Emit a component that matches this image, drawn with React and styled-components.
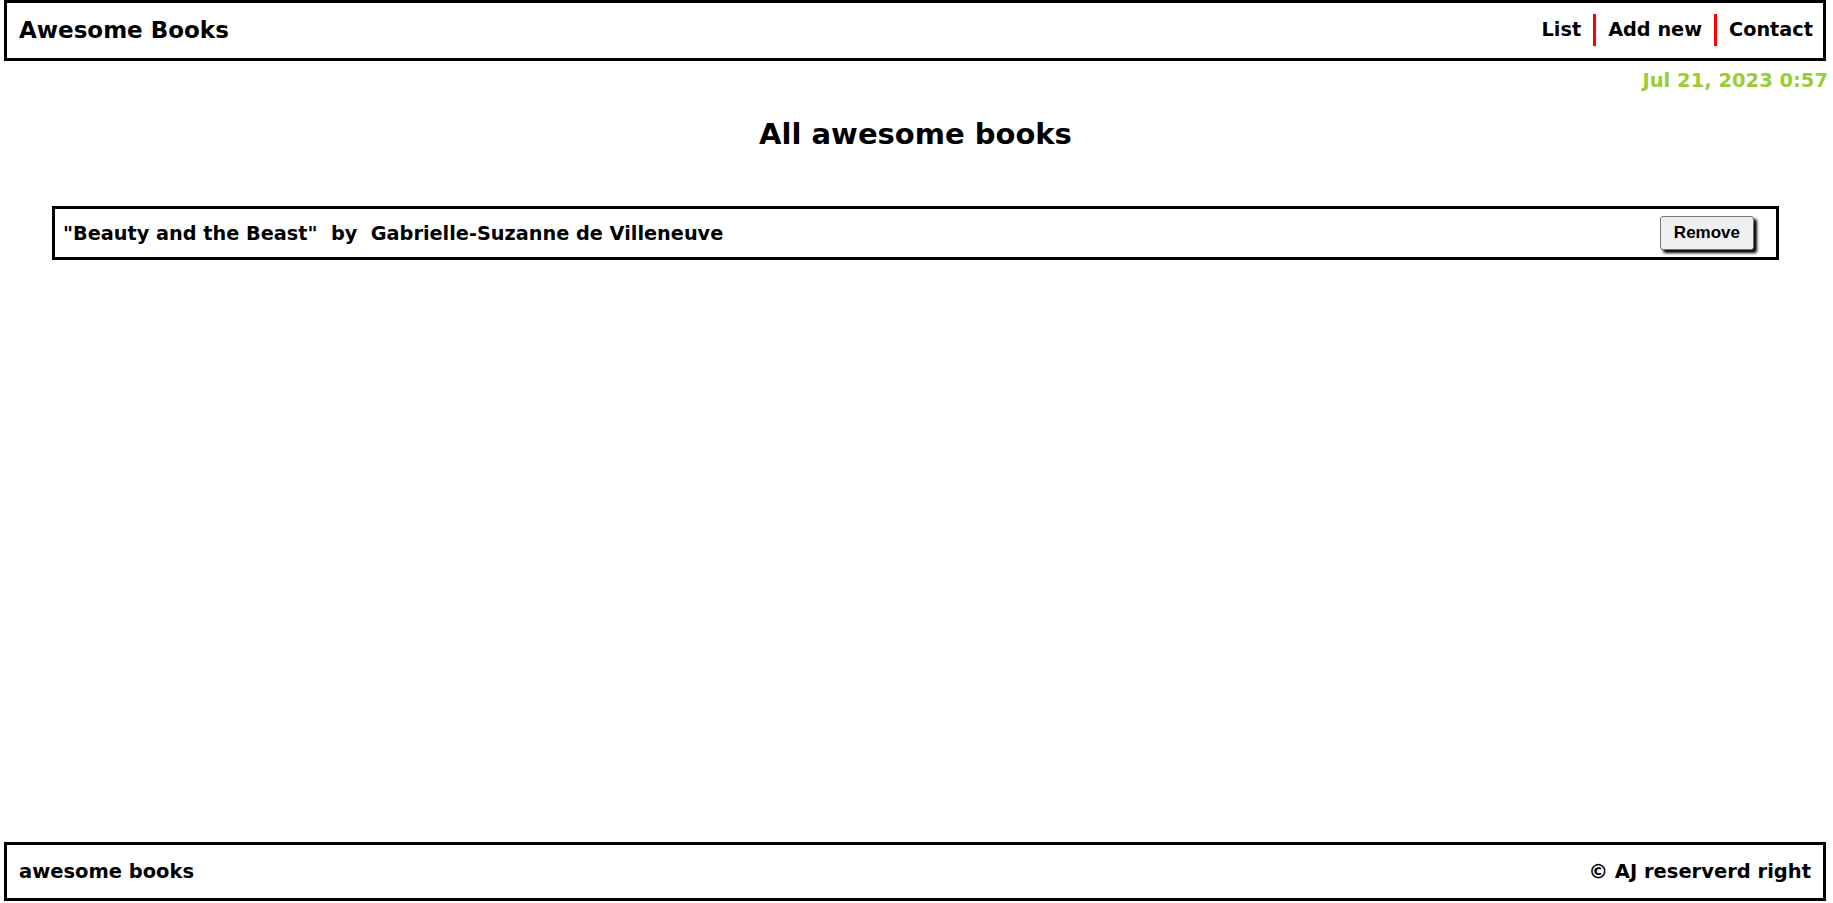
import React from 'react'
import styled, { createGlobalStyle } from 'styled-components'

const GlobalStyle = createGlobalStyle`
  * {
    box-sizing: border-box;
  }

  body {
    margin: 0;
    padding: 0 7px 0 4px;
    font-family: "DejaVu Sans", "Noto Sans", sans-serif;
    color: #000;
    background: #fff;
  }
`

const Page = styled.div`
  display: flex;
  flex-direction: column;
  min-height: 902px;
`

const Header = styled.header`
  display: flex;
  align-items: center;
  justify-content: space-between;
  height: 61px;
  border: 3px solid #000;
  padding: 0 10px 2px 12px;
`

const Brand = styled.h1`
  margin: 0;
  font-size: 23px;
  font-weight: 700;
`

const Nav = styled.nav`
  display: flex;
  align-items: center;
`

const NavLink = styled.a`
  font-size: 19.3px;
  font-weight: 700;
  color: #000;
  text-decoration: none;
  padding: 0 12px;
  line-height: 32px;
  border-left: ${(p) => (p.first ? 'none' : '3px solid #f00')};

  &:last-child {
    padding-right: 0;
  }
`

const DateLine = styled.p`
  margin: 8px -2px 0 0;
  text-align: right;
  font-size: 19.5px;
  font-weight: 700;
  color: #9acd32;
`

const Main = styled.main`
  display: flex;
  flex-direction: column;
  padding: 0 47px 0 48px;
`

const Title = styled.h2`
  margin: 25px 0 55px;
  text-align: center;
  font-size: 29px;
  font-weight: 700;
`

const BookRow = styled.div`
  display: flex;
  align-items: center;
  justify-content: space-between;
  height: 54px;
  border: 3px solid #000;
  padding: 0 22px 0 8px;
`

const BookText = styled.p`
  margin: 0;
  font-size: 19.3px;
  font-weight: 700;
  white-space: pre;
`

const RemoveButton = styled.button`
  font-family: "Liberation Sans", Arial, sans-serif;
  font-size: 17px;
  font-weight: 700;
  color: #000;
  background: #efefef;
  border: 1px solid #767676;
  border-radius: 3px;
  height: 34px;
  padding: 0 13px;
  box-shadow: 3px 3px 3px #000;
`

const Footer = styled.footer`
  display: flex;
  align-items: center;
  justify-content: space-between;
  margin-top: auto;
  height: 59px;
  border: 3px solid #000;
  padding: 0 12px 0 12px;
  margin-bottom: 1px;
`

const FootText = styled.p`
  margin: 0;
  font-size: 19.5px;
  font-weight: 700;
`

const books = [
  { title: 'Beauty and the Beast', author: 'Gabrielle-Suzanne de Villeneuve' }
]

const App = () => (
  <Page>
    <GlobalStyle />
    <Header>
      <Brand>Awesome Books</Brand>
      <Nav>
        <NavLink href="#list" first>List</NavLink>
        <NavLink href="#add">Add new</NavLink>
        <NavLink href="#contact">Contact</NavLink>
      </Nav>
    </Header>
    <DateLine>Jul 21, 2023 0:57</DateLine>
    <Main>
      <Title>All awesome books</Title>
      {books.map((b) => (
        <BookRow key={b.title}>
          <BookText>{`"${b.title}"  by  ${b.author}`}</BookText>
          <RemoveButton>Remove</RemoveButton>
        </BookRow>
      ))}
    </Main>
    <Footer>
      <FootText>awesome books</FootText>
      <FootText>© AJ reserverd right</FootText>
    </Footer>
  </Page>
)

export default App
